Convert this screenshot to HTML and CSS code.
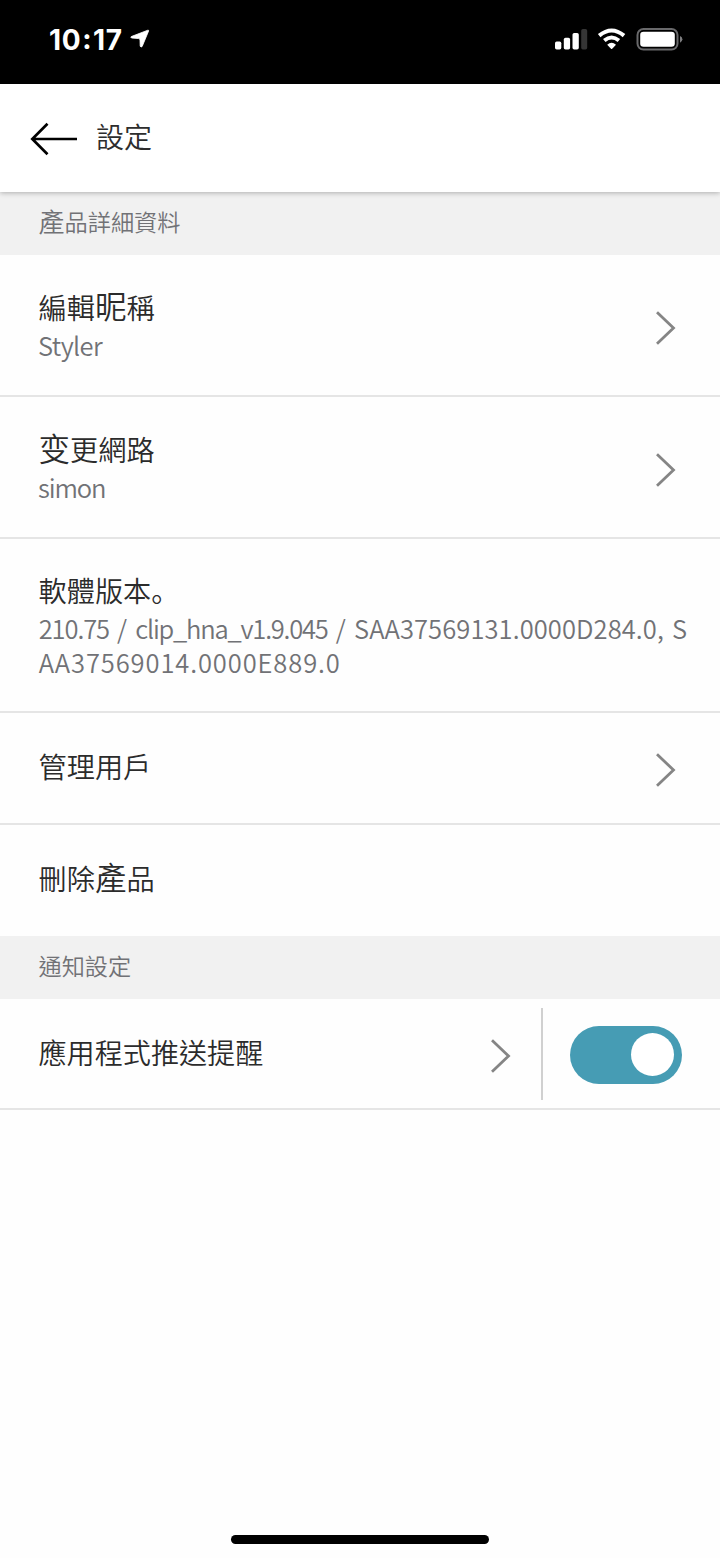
FILE: index.html
```html
<!DOCTYPE html>
<html lang="zh-Hant">
<head>
<meta charset="utf-8">
<title>設定</title>
<link rel="stylesheet" href="styles.css">
</head>
<body>
<div class="screen">
  <div class="status">
    <span class="time">10<span class="colon">:</span>17</span>
    <svg class="location" width="20" height="20" viewBox="0 0 20 20"><path d="M17.8 1.2 L1.2 7.6 Q.4 8.4 1.5 9 L8.8 9.6 Q10 9.8 10 11 L10.2 17.2 Q11 18.8 12.2 17.4 L18.6 2 Q18.8 .9 17.8 1.2Z" fill="#fff" stroke="#fff" stroke-width=".8"/></svg>
    <svg class="indicators" width="130" height="24" viewBox="0 0 130 24">
      <g fill="#fff"><rect x="0" y="13.5" width="6.3" height="8" rx="1.7"/><rect x="8.8" y="9.8" width="6.3" height="11.7" rx="1.7"/><rect x="17.5" y="5" width="6.3" height="16.5" rx="1.7"/><rect x="26.2" y="1" width="6" height="20.5" rx="1.7" fill="#353535"/></g>
      <g fill="none" stroke="#fff" stroke-width="4"><path d="M44.2 7.6 Q56.6 -2.6 69 7.6"/><path d="M49.3 12.5 Q56.6 6.5 63.9 12.5"/></g>
      <path d="M52.2 16.7 Q56.6 13 61 16.7 L57.2 20.8 Q56.6 21.4 56 20.8Z" fill="#fff"/>
      <rect x="82.5" y="1" width="40" height="20.6" rx="6" fill="none" stroke="#69696b" stroke-width="2"/>
      <rect x="85.2" y="3.8" width="34.6" height="15" rx="3.3" fill="#fff"/>
      <path d="M125 8 Q127.4 9 127.4 11.3 Q127.4 13.7 125 14.8Z" fill="#7d7d7f"/>
    </svg>
  </div>
  <header class="header">
    <svg class="back" width="48" height="34" viewBox="0 0 48 34"><path d="M17.5 1.8 L2.3 17 L17.5 32.2 M2.3 17 H47" fill="none" stroke="#000" stroke-width="2.7"/></svg>
    <h1 class="heading">設定</h1>
  </header>
  <h2 class="section"><span class="wide-small">產</span>品詳細資料</h2>
  <div class="row tall">
    <div class="text"><div class="title">編輯<span class="wide">昵</span>稱</div><div class="sub tight">Styler</div></div>
    <svg class="chevron" width="22" height="36" viewBox="0 0 22 36"><path d="M2 2.3 L18.5 18 L2 33.7" fill="none" stroke="#858585" stroke-width="2.8"/></svg>
  </div>
  <div class="row tall">
    <div class="text"><div class="title"><span class="wide">变</span>更網路</div><div class="sub tighter">simon</div></div>
    <svg class="chevron" width="22" height="36" viewBox="0 0 22 36"><path d="M2 2.3 L18.5 18 L2 33.7" fill="none" stroke="#858585" stroke-width="2.8"/></svg>
  </div>
  <div class="row version">
    <div class="text"><div class="title">軟體版本<span class="stop" lang="ja">。</span></div><div class="sub"><span class="line first"><span class="number">210.75</span> / <span class="module">clip_hna_v1.9.045</span> / <span class="part">SAA37569131.0000D284.0,</span> S</span><span class="line spaced">AA37569014.0000E889.0</span></div></div>
  </div>
  <div class="row short">
    <div class="title">管理用戶</div>
    <svg class="chevron" width="22" height="36" viewBox="0 0 22 36"><path d="M2 2.3 L18.5 18 L2 33.7" fill="none" stroke="#858585" stroke-width="2.8"/></svg>
  </div>
  <div class="row short last">
    <div class="title">刪除<span class="wide">產</span>品</div>
  </div>
  <h2 class="section">通知設定</h2>
  <div class="row short alerts">
    <div class="title">應用程式推送提醒</div>
    <svg class="chevron" width="22" height="36" viewBox="0 0 22 36"><path d="M2 2.3 L18.5 18 L2 33.7" fill="none" stroke="#858585" stroke-width="2.8"/></svg>
    <div class="divider"></div>
    <div class="switch"><div class="knob"></div></div>
  </div>
  <div class="home"></div>
</div>
</body>
</html>
```
FILE: styles.css
```css
* { box-sizing: border-box; }
body { margin: 0; background: #fefefe; font-family: "Noto Sans CJK TC", sans-serif; font-weight: 350; }
.screen { width: 720px; height: 1558px; display: flex; flex-direction: column; background: #fefefe; overflow: hidden; }
.status { height: 84px; flex: none; background: #000; display: flex; align-items: flex-start; padding: 0 35px 0 49px; }
.time { color: #fff; font: 700 28px/32px Inter, sans-serif; margin-top: 24px; width: 81px; letter-spacing: .6px; white-space: nowrap; }
.colon { margin: 0 1px; position: relative; top: -1.5px; }
.location { margin-top: 29px; }
.indicators { margin: 28px 0 0 auto; }
.header { height: 108px; flex: none; display: flex; align-items: center; padding: 1px 0 0 30px; position: relative; box-shadow: 0 1px 5px rgba(0,0,0,.28); background: #fff; }
.back { margin-right: 18px; }
.heading { margin: 0 0 6px; font: 350 28px/40px "Noto Sans CJK TC", sans-serif; color: #2d2d2d; }
.section { margin: 0; height: 63px; flex: none; background: #f1f1f1; color: #717276; padding: 0 38px 6px 38.5px; display: flex; align-items: center; font: 350 23.2px/36px "Noto Sans CJK TC", sans-serif; }
.row { flex: none; display: flex; align-items: center; justify-content: space-between; padding: 0 43px 0 38px; border-bottom: 2px solid #e5e5e5; }
.tall { height: 142px; }
.version { height: 174px; padding-right: 0; }
.short { height: 111.5px; }
.last { border-bottom: 0; }
.title { font: 350 28.2px/40px "Noto Sans CJK TC", sans-serif; color: #2b2b2b; white-space: nowrap; position: relative; top: -1px; left: .5px; }
.wide { font-size: 31.5px; line-height: 1; }
.wide-small { font-size: 26px; }
.stop { font-family: "Noto Sans CJK JP", sans-serif; }
.sub { font-size: 25.5px; line-height: 34.5px; color: #717276; }
.tight { letter-spacing: -.6px; }
.tighter { letter-spacing: -1.1px; }
.line { display: block; white-space: nowrap; padding-left: .7px; }
.first { letter-spacing: .4px; word-spacing: 1.9px; }
.spaced { letter-spacing: .9px; }
.number { letter-spacing: -1.1px; }
.module { letter-spacing: -1.2px; }
.part { letter-spacing: .1px; }
.chevron { margin-top: 5px; }
.short > .title { margin-bottom: 1px; }
.last > .title { margin-bottom: 3px; }
.alerts { height: 111px; padding-right: 38px; }
.alerts .title { font-size: 28.1px; }
.alerts .chevron { margin-left: auto; margin-right: 29px; }
.divider { width: 2px; height: 92px; background: #d0d0d0; margin-right: 27px; }
.switch { width: 112px; height: 58px; border-radius: 29px; background: #469cb4; display: flex; align-items: center; justify-content: flex-end; padding-right: 8px; margin-top: 2px; }
.knob { width: 43px; height: 43px; border-radius: 50%; background: #fff; }
.home { width: 258px; height: 9px; border-radius: 5px; background: #000; margin: auto auto 14px; }
```
